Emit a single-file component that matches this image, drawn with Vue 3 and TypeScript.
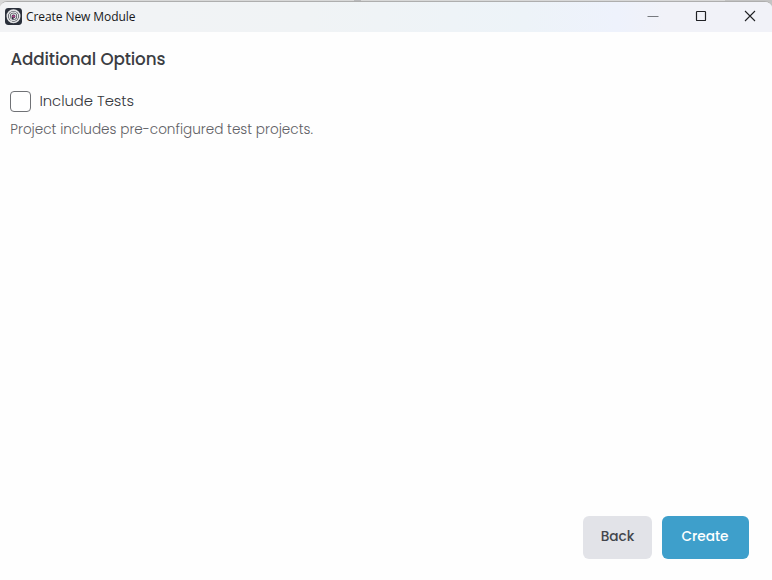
<script setup lang="ts">
import { ref } from 'vue'

const includeTests = ref<boolean>(false)
</script>

<template>
  <div class="desktop">
    <div class="window">
      <header class="titlebar">
        <svg class="app-icon" viewBox="0 0 17 17" aria-hidden="true">
          <rect width="17" height="17" rx="3.4" fill="#2b303b" />
          <g fill="none" stroke="#e2e3e5">
            <circle cx="8.5" cy="8.3" r="6.2" stroke-width="1.6" />
            <circle cx="8.5" cy="8.3" r="4.2" stroke-width="1.3" />
            <path d="M6.1 14.4V8.3a2.4 2.4 0 1 1 2.4 2.4" stroke-width="1.1" />
          </g>
          <circle cx="8.6" cy="8.3" r="1.4" fill="#a8488a" />
        </svg>
        <span class="title">Create New Module</span>
        <nav class="controls">
          <svg viewBox="0 0 12 12"><path d="M1.5 6.5h11" stroke="#777a7f" /></svg>
          <svg viewBox="0 0 12 12"><rect x="1.5" y="1.5" width="9" height="9" rx=".6" stroke="#202125" stroke-width="1.2" /></svg>
          <svg viewBox="0 0 12 12"><path d="M1 1l10 10M11 1L1 11" stroke="#202125" stroke-width="1.1" /></svg>
        </nav>
      </header>
      <main class="content">
        <h1>Additional Options</h1>
        <label class="option">
          <input v-model="includeTests" type="checkbox" />
          <span>Include Tests</span>
        </label>
        <p>Project includes pre-configured test projects.</p>
      </main>
      <footer class="actions">
        <button class="back" type="button"><span>Back</span></button>
        <button class="create" type="button"><span>Create</span></button>
      </footer>
    </div>
  </div>
</template>

<style>
body {
  background: #fff;
}
</style>

<style scoped>
.desktop {
  box-sizing: border-box;
  height: 580px;
  padding-top: 1px;
  background: linear-gradient(90deg, #d8d8d8 354px, #b9b9bb 354px 361px, #d8d8d8 361px 725px, #c4c4c4 725px);
  font-family: Poppins, Inter, sans-serif;
}
.window {
  box-sizing: border-box;
  display: flex;
  flex-direction: column;
  height: 579px;
  border-top: 1px solid #aeaeae;
  border-radius: 7px 7px 0 0;
  background: #fefefe;
  overflow: hidden;
}
.titlebar {
  display: flex;
  flex: none;
  align-items: center;
  box-sizing: border-box;
  height: 29.5px;
  padding: 0 16px 1.5px 5px;
  background: linear-gradient(90deg, #f2f3f5, #f0f3f5 40%, #edf3f8 68%, #eef2fc 80%, #f1f2f8 86%);
}
.app-icon {
  width: 17px;
  height: 17px;
}
.title {
  margin-left: 4px;
  padding-top: 2px;
  color: #17181a;
  font: 12px/16px "Segoe UI", "Open Sans", sans-serif;
  letter-spacing: -0.08px;
  white-space: nowrap;
}
.controls {
  display: flex;
  gap: 37px;
  margin-left: auto;
}
.controls svg {
  width: 12px;
  height: 12px;
  fill: none;
  overflow: visible;
}
.content {
  flex: 1;
  padding: 15.5px 10px;
}
h1 {
  margin: 0;
  padding-left: 0.5px;
  color: #3b3d43;
  font-size: 16.8px;
  font-weight: 500;
  letter-spacing: -0.13px;
  line-height: 24px;
}
.option {
  display: flex;
  align-items: center;
  gap: 8px;
  height: 22px;
  margin-top: 19px;
  color: #36383d;
  font-size: 14.8px;
  font-weight: 300;
  letter-spacing: -0.03px;
}
.option span {
  line-height: 20px;
  padding: 0 0 1px 0.4px;
}
.option input {
  appearance: none;
  box-sizing: border-box;
  width: 21px;
  height: 21px;
  margin: 0;
  border: 1px solid #707276;
  border-radius: 4px;
  background: #fff;
}
p {
  margin: 8px 0 0;
  padding-left: 0.3px;
  color: #5e6065;
  font-size: 13.6px;
  font-weight: 300;
  line-height: 20px;
}
.actions {
  display: flex;
  justify-content: flex-end;
  gap: 9.5px;
  padding: 0 23.5px 21.5px 0;
}
button {
  height: 42.5px;
  padding: 0 0 1px;
  border: 0;
  border-radius: 6px;
  font-family: inherit;
  font-size: 13.7px;
  font-weight: 500;
  letter-spacing: -0.05px;
}
.back {
  width: 69px;
  background: #e2e3e8;
  color: #43464c;
}
.create {
  width: 87px;
  background: #3e9fcb;
  color: #fff;
}
</style>
